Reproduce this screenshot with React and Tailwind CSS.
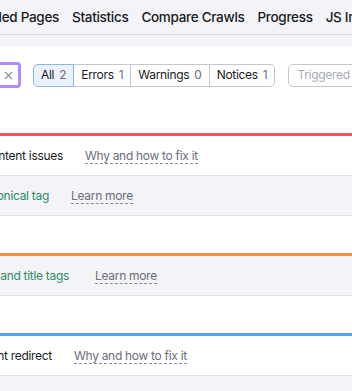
import { X } from 'lucide-react';

const tabs = ['Crawled Pages', 'Statistics', 'Compare Crawls', 'Progress', 'JS Impact'];

const filters = [
  { label: 'All', count: 2, active: true },
  { label: 'Errors', count: 1 },
  { label: 'Warnings', count: 0 },
  { label: 'Notices', count: 1 },
];

const DashedLink = ({ children }) => (
  <span className="whitespace-nowrap border-b border-dashed border-[#8a8e9b] leading-[15px] text-[#6c6e79]">{children}</span>
);

// the panel is scrolled sideways, so only the end of each label shows
const Clipped = ({ width, className, children }) => (
  <div className="flex shrink-0 justify-end overflow-hidden" style={{ width }}>
    <span className={`whitespace-nowrap ${className}`}>{children}</span>
  </div>
);

const IssueGroup = ({ color, title, titleWidth, link, sub, subWidth, subLink, subGap = 22 }) => (
  <div>
    <div className={`h-[3px] ${color}`} />
    {title && (
      <div className="flex h-[40px] items-center gap-[22px] border-b border-[#e0e1e9] bg-white">
        <Clipped width={titleWidth} className="text-[#191b23]">{title}</Clipped>
        <DashedLink>{link}</DashedLink>
      </div>
    )}
    {sub && (
      <div className="flex h-[40px] items-center border-b border-[#e0e1e9] bg-[#f4f4f8]" style={{ gap: subGap }}>
        <Clipped width={subWidth} className="text-[#2e8b66]">{sub}</Clipped>
        <DashedLink>{subLink}</DashedLink>
      </div>
    )}
  </div>
);

export default function App() {
  return (
    <div className="h-[391px] w-[352px] overflow-hidden bg-[#f4f4f8] font-['Inter',sans-serif] text-[12px] tracking-[-0.3px]">
      <nav className="flex h-[35px] items-center gap-[13px] whitespace-nowrap border-b border-[#d9dae0] text-[13.5px] font-medium text-[#191b23]">
        <Clipped width="59px">{tabs[0]}</Clipped>
        {tabs.slice(1).map((t) => (
          <span key={t} className="shrink-0">{t}</span>
        ))}
      </nav>

      <div className="mt-[11px] bg-white">
        <div className="flex h-[58px] items-center whitespace-nowrap">
          <div className="flex h-[26px] w-[21px] shrink-0 items-center justify-center rounded-r-[4px] border-[3px] border-l-0 border-[#b18cfe]">
            <X size={13} className="-ml-[1px] text-[#8a8e9b]" strokeWidth={2} />
          </div>
          <div className="ml-[12px] flex h-[23px] shrink-0 text-[#191b23]">
            {filters.map((f, i) => (
              <div
                key={f.label}
                className={`flex items-center gap-[5px] px-[7px] ${
                  f.active
                    ? 'rounded-l-[5px] border border-[#8bb6eb] bg-[#e9f2fd]'
                    : `border-y border-r border-[#c4c7cf] ${i === filters.length - 1 ? 'rounded-r-[5px]' : ''}`
                }`}
              >
                <span>{f.label}</span>
                <span className="text-[#6c6e79]">{f.count}</span>
              </div>
            ))}
          </div>
          <div className="ml-[13px] flex h-[23px] w-[120px] shrink-0 items-center rounded-[5px] border border-[#c4c7cf] px-[8px] text-[#a9abb6]">
            Triggered on
          </div>
        </div>

        <div className="h-[29px]" />
        <IssueGroup
          color="bg-[#f0575c]"
          title="Duplicate content issues"
          titleWidth="63px"
          link="Why and how to fix it"
          sub="No canonical tag"
          subWidth="49px"
          subLink="Learn more"
        />
        <div className="h-[37px]" />
        <IssueGroup
          color="bg-[#f68e4c]"
          sub="Duplicate H1 and title tags"
          subWidth="69px"
          subGap={26}
          subLink="Learn more"
        />
        <div className="h-[37px]" />
        <IssueGroup
          color="bg-[#4fa6f7]"
          title="Permanent redirect"
          titleWidth="52px"
          link="Why and how to fix it"
        />
        <div className="h-[20px] bg-[#f4f4f8]" />
      </div>
    </div>
  );
}
